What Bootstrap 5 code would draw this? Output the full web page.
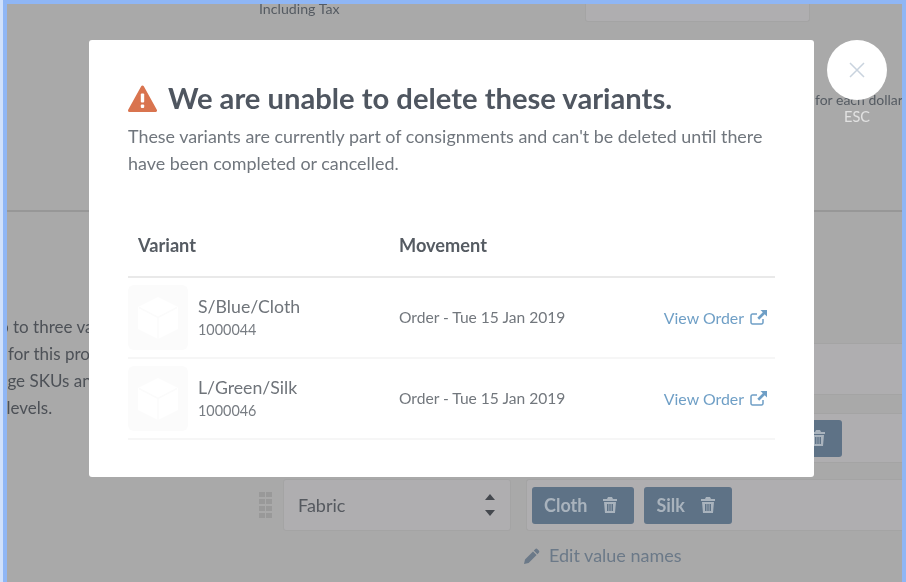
<!DOCTYPE html>
<html lang="en">
<head>
<meta charset="utf-8">
<title>Delete variants</title>
<link href="https://cdn.jsdelivr.net/npm/bootstrap@5.3.0/dist/css/bootstrap.min.css" rel="stylesheet">
<style>
html,body{height:582px;overflow:hidden;background:#cfe0fb;}
body{font-family:"Lato","Liberation Sans",sans-serif;color:#555;}
.stage{height:582px;position:relative;overflow:hidden;background:#a9a9a9;border-top:4px solid #8fb6f5;border-left:4px solid #8fb6f5;border-right:4px solid #8fb6f5;margin-left:3px;width:903px;filter:blur(.45px);}
.bg-top{height:208px;border-bottom:2px solid #979797;display:grid;grid-template-columns:252px 326px 225px 1fr;color:#555b62;font-size:14.2px;flex:none;}
.tax-label{line-height:10px;}
.price-box{height:18px;background:#afaeb0;border:1px solid #a4a4a4;border-top:0;border-radius:0 0 3px 3px;}
.dollar{padding:87px 0 0 5px;white-space:nowrap;line-height:18px;font-size:14px;}
.bg-bottom{display:flex;flex:1;min-height:0;}
.help{width:252px;flex:none;padding-top:101px;margin-left:-52px;font-size:17px;line-height:27px;color:#4d5157;white-space:nowrap;}
.help-back{display:inline-block;margin-left:-8px;}
.opts{width:100%;padding-top:131px;margin-left:52px;}
.opt-row{display:flex;height:52px;margin-bottom:18px;}
.opt-row.r2{height:50px;margin-bottom:16px;}
.grip{width:24px;flex:none;display:grid;grid-template-columns:6px 6px;grid-auto-rows:5px;gap:2px 1px;align-content:center;}
.grip i{background:#999;display:block;}
.pick{width:228px;flex:none;background:#afaeb0;border:1px solid #a4a4a4;border-radius:3px;display:flex;align-items:center;justify-content:space-between;padding:0 14px;font-size:18px;color:#55595f;}
.vals{margin-left:15px;flex:1;background:#afaeb0;border:1px solid #a4a4a4;border-right:0;border-radius:3px 0 0 3px;display:flex;align-items:center;gap:10px;padding:0 6px 0 5px;}
.r2 .vals{justify-content:flex-end;padding-right:60px;}
.chip{background:#5e7286;color:#a9b3bd;border-radius:3px;height:37px;font-size:18px;font-weight:700;display:flex;align-items:center;gap:16px;padding:0 17px 0 12px;white-space:nowrap;}
.edit-line{padding-left:265px;display:flex;align-items:center;gap:9px;margin-top:-7px;font-size:18px;color:#6b7988;}
.veil{position:absolute;inset:0;display:flex;align-items:flex-start;padding:36px 0 0 82px;gap:13px;}
.sheet.modal-content{width:725px;height:437px;flex:none;padding:40px 39px 0;border:0;border-radius:3px;background:#fff;color:#6f757c;display:block;}
.head-line{display:flex;align-items:center;gap:11px;margin:0;font-size:29.2px;line-height:36px;font-weight:700;color:#4f5660;height:36px;white-space:nowrap;}
.sub{font-size:17.9px;line-height:27px;margin:7px 0 37px;color:#70767d;}
.var-table{table-layout:fixed;width:647px;margin:0;--bs-table-bg:transparent;}
.var-table th{font-size:18.2px;font-weight:700;color:#555b62;line-height:24px;padding:19px 0 19px 10px;border-bottom:2px solid #e9e9e9;}
.var-table td{height:81px;padding:0 0 0 10px;vertical-align:middle;border-bottom:2px solid #f6f6f6;font-size:15.6px;color:#72777d;}
.var-table td.first{padding:0;}
.var-table td.last{font-size:15.9px;}
.thumb{width:60px;height:65px;border-radius:6px;background:#fbfbfb;flex:none;display:flex;align-items:center;justify-content:center;}
.vtext{margin-left:2px;}
.vname{font-size:17.7px;line-height:23px;color:#6f747a;}
.vsku{font-size:14.4px;line-height:23px;color:#787d83;}
.go{color:#6f9fc6;text-decoration:none;display:inline-flex;align-items:center;gap:6px;white-space:nowrap;padding-right:8px;}
.closer{width:60px;flex:none;text-align:center;color:#e2e2e2;font-size:14.5px;}
.disc{width:60px;height:60px;border-radius:50%;background:#fff;display:flex;align-items:center;justify-content:center;margin-bottom:6px;}
</style>
</head>
<body>
<div class="stage d-flex flex-column">
  <div class="bg-top">
    <div></div>
    <div class="tax-label">Including Tax</div>
    <div class="price-box"></div>
    <div class="dollar">for each dollar</div>
  </div>
  <div class="bg-bottom">
    <div class="help">Add up to three variant<br>option for this product<br><span class="help-back">to manage SKUs and</span><br>stocks levels.</div>
    <div class="opts">
      <div class="opt-row">
        <div class="grip"><i></i><i></i><i></i><i></i><i></i><i></i><i></i><i></i></div>
        <div class="pick">Size</div>
        <div class="vals"></div>
      </div>
      <div class="opt-row r2">
        <div class="grip"><i></i><i></i><i></i><i></i><i></i><i></i><i></i><i></i></div>
        <div class="pick">Colour</div>
        <div class="vals"><span class="chip">Green
          <svg width="14" height="16" viewBox="0 0 14 16"><path fill="currentColor" d="M5 0h4l1 2h4v2H0V2h4zM1 5h12l-1 11H2zM4 7v7h1.5V7zm2.3 0v7h1.4V7zm2.2 0v7H10V7z" fill-rule="evenodd"/></svg></span></div>
      </div>
      <div class="opt-row">
        <div class="grip"><i></i><i></i><i></i><i></i><i></i><i></i><i></i><i></i></div>
        <div class="pick">Fabric
          <svg width="12" height="26" viewBox="0 0 12 26"><path fill="#45494f" d="M6 2l5 6H1zM1 18h10l-5 6z"/></svg></div>
        <div class="vals">
          <span class="chip">Cloth
            <svg width="14" height="16" viewBox="0 0 14 16"><path fill="currentColor" d="M5 0h4l1 2h4v2H0V2h4zM1 5h12l-1 11H2zM4 7v7h1.5V7zm2.3 0v7h1.4V7zm2.2 0v7H10V7z" fill-rule="evenodd"/></svg></span>
          <span class="chip">Silk
            <svg width="14" height="16" viewBox="0 0 14 16"><path fill="currentColor" d="M5 0h4l1 2h4v2H0V2h4zM1 5h12l-1 11H2zM4 7v7h1.5V7zm2.3 0v7h1.4V7zm2.2 0v7H10V7z" fill-rule="evenodd"/></svg></span>
        </div>
      </div>
      <div class="edit-line">
        <svg width="16" height="16" viewBox="0 0 16 16"><path fill="currentColor" d="M11.2 1.2a1.6 1.6 0 0 1 2.3 0l1.3 1.3a1.6 1.6 0 0 1 0 2.3l-1.4 1.4-3.600-3.600zM9 3.400l3.600 3.600-8 8L0 16l1-4.600z"/></svg>
        Edit value names
      </div>
    </div>
  </div>

  <div class="veil">
    <div class="sheet modal-content">
      <h2 class="head-line">
        <svg width="29" height="27" viewBox="0 0 29 27"><path fill="#d9744f" stroke="#d9744f" stroke-width="3" stroke-linejoin="round" d="M14.5 2L27.5 25.500H1.500z"/><rect x="12.800" y="8.500" width="3.400" height="9" rx="1" fill="#fff"/><rect x="12.800" y="19.500" width="3.400" height="3.400" rx="1" fill="#fff"/></svg>
        We are unable to delete these variants.
      </h2>
      <p class="sub">These variants are currently part of consignments and can't be deleted until there have been completed or cancelled.</p>
      <table class="table var-table">
        <colgroup><col style="width:261px"><col style="width:246px"><col></colgroup>
        <thead><tr><th>Variant</th><th>Movement</th><th></th></tr></thead>
        <tbody>
          <tr>
            <td class="first"><div class="d-flex align-items-center gap-2">
              <div class="thumb"><svg width="40" height="42" viewBox="0 0 40 42"><path fill="#fff" d="M20 0l20 10v22L20 42 0 32V10z"/><path stroke="#fbfbfb" stroke-width="1.500" fill="none" d="M1 10.500l19 10 19-10M20 20.500V42"/></svg></div>
              <div class="vtext"><div class="vname">S/Blue/Cloth</div><div class="vsku">1000044</div></div>
            </div></td>
            <td>Order - Tue 15 Jan 2019</td>
            <td class="text-end last"><a class="go" href="#">View Order
              <svg width="17" height="15" viewBox="0 0 17 15"><path fill="none" stroke="currentColor" stroke-width="1.500" d="M13 9v3.500a1.500 1.500 0 0 1-1.500 1.500h-9A1.500 1.500 0 0 1 1 12.500v-7A1.500 1.500 0 0 1 2.500 4H7"/><path fill="currentColor" d="M10.500 0H17v6.500l-2.300-2.300-5.500 5.500-1.900-1.900 5.500-5.500z"/></svg></a></td>
          </tr>
          <tr>
            <td class="first"><div class="d-flex align-items-center gap-2">
              <div class="thumb"><svg width="40" height="42" viewBox="0 0 40 42"><path fill="#fff" d="M20 0l20 10v22L20 42 0 32V10z"/><path stroke="#fbfbfb" stroke-width="1.500" fill="none" d="M1 10.500l19 10 19-10M20 20.500V42"/></svg></div>
              <div class="vtext"><div class="vname">L/Green/Silk</div><div class="vsku">1000046</div></div>
            </div></td>
            <td>Order - Tue 15 Jan 2019</td>
            <td class="text-end last"><a class="go" href="#">View Order
              <svg width="17" height="15" viewBox="0 0 17 15"><path fill="none" stroke="currentColor" stroke-width="1.500" d="M13 9v3.500a1.500 1.500 0 0 1-1.500 1.500h-9A1.500 1.500 0 0 1 1 12.500v-7A1.500 1.500 0 0 1 2.500 4H7"/><path fill="currentColor" d="M10.500 0H17v6.500l-2.300-2.300-5.500 5.500-1.900-1.900 5.500-5.500z"/></svg></a></td>
          </tr>
        </tbody>
      </table>
    </div>
    <div class="closer">
      <div class="disc"><svg width="20" height="20" viewBox="0 0 20 20"><path stroke="#c9d3de" stroke-width="1.500" d="M3 3l14 14M17 3L3 17"/></svg></div>
      ESC
    </div>
  </div>
</div>
<script src="https://cdn.jsdelivr.net/npm/bootstrap@5.3.0/dist/js/bootstrap.bundle.min.js"></script>
</body>
</html>
